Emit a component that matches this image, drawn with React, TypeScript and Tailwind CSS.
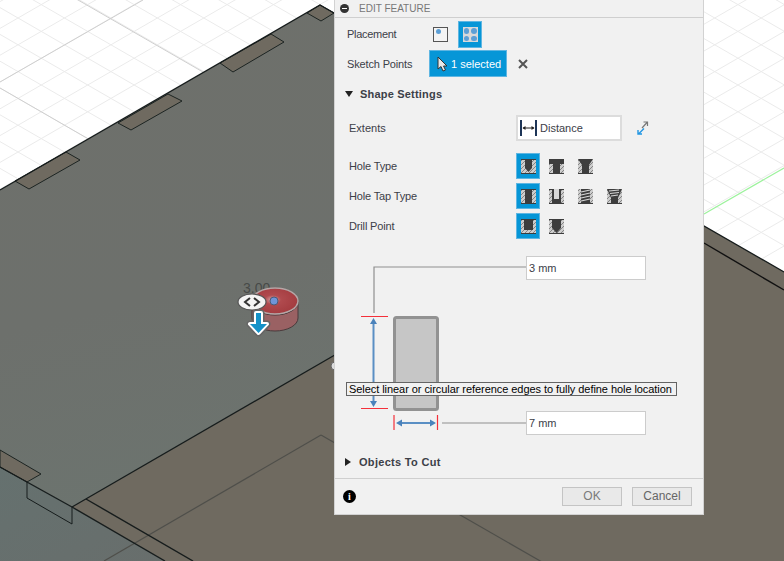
const STEP = 26.8;
const SLOPE = 0.577;
const steps = Array.from({ length: 70 }, (_, i) => i - 20);

function Scene() {
  return (
    <svg viewBox="0 0 784 561" className="block w-full h-full">
      <defs>
        <linearGradient id="plate" x1="0" y1="0" x2="0.3" y2="1">
          <stop offset="0" stopColor="#6e706b" />
          <stop offset="0.6" stopColor="#6d706c" />
          <stop offset="1" stopColor="#6c746f" />
        </linearGradient>
        <linearGradient id="low" x1="0" y1="0" x2="1" y2="1">
          <stop offset="0" stopColor="#65716f" />
          <stop offset="1" stopColor="#686e6c" />
        </linearGradient>
        <radialGradient id="glow" cx="0.45" cy="0.45" r="0.6">
          <stop offset="0" stopColor="#d8a8a8" />
          <stop offset="0.3" stopColor="#b04a4e" />
          <stop offset="1" stopColor="#a23a3e" />
        </radialGradient>
      </defs>
      <rect width="784" height="561" fill="#fff" />
      {steps.map(k => (
        <g key={k} stroke="#ebebeb" strokeWidth="1">
          <line x1="0" y1={82 + k * STEP} x2="784" y2={82 + k * STEP - 784 * SLOPE} />
          <line x1="0" y1={88 + k * STEP} x2="784" y2={88 + k * STEP + 784 * SLOPE} />
        </g>
      ))}
      <g stroke="#cfcfcf" strokeWidth="1">
        <line x1="0" y1="82" x2="143" y2="0" />
        <line x1="0" y1="-45" x2="784" y2="407" />
        <line x1="0" y1="88" x2="784" y2="540" />
      </g>
      <line x1="704" y1="214" x2="784" y2="168" stroke="#9cf29c" strokeWidth="1.2" />

      {/* lower body under the plate */}
      <polygon points="0,467 72,507 165,561 0,561" fill="url(#low)" />
      <polygon points="320,5 784,272 784,561 193,561 72,507" fill="#6f6a60" />
      <polygon points="72,507 86,499 193,561 165,561" fill="#6f6a60" />
      <line x1="104" y1="561" x2="321" y2="435" stroke="#4f4f4a" strokeWidth="1.2" />
      <line x1="321" y1="435" x2="542" y2="562" stroke="#4f4f4a" strokeWidth="1.2" />
      <line x1="704" y1="243" x2="784" y2="290" stroke="#111" strokeWidth="1.4" />

      {/* top plate */}
      <polygon points="0,190 320,5 631,184 72,507 0,467" fill="url(#plate)" />
      {[
        "15,181 29,189 80,160 66,152",
        "118,123 131,130 182,101 168,94",
        "220,63 233,72 284,42 271,34",
        "307,13 321,21 334,13 320,5",
        "0,450 41,474 27,482 0,467",
      ].map(p => (
        <polygon key={p} points={p} fill="#6f6a60" stroke="#1c2422" strokeWidth="1" />
      ))}
      <polyline points="0,190 320,5 784,272" fill="none" stroke="#161c1c" strokeWidth="1.3" />
      <polyline points="0,467 72,507 165,561" fill="none" stroke="#161c1c" strokeWidth="1.4" />
      <line x1="72" y1="507" x2="340" y2="352" stroke="#161c1c" strokeWidth="1.3" />
      <line x1="86" y1="499" x2="193" y2="561" stroke="#161c1c" strokeWidth="1.4" />
      <polyline points="27,482 27,498 72,524 72,507" fill="none" stroke="#161c1c" strokeWidth="1" />
      <circle cx="335" cy="366" r="4" fill="#dcdcdc" stroke="#666" strokeWidth="1" />

      {/* hole preview */}
      <text x="243" y="293" fontSize="14" fill="#474a48" fontFamily="Liberation Sans">3.00</text>
      <path d="M252 301 a23 13 0 0 1 46 0 v17 a23 13 0 0 1 -46 0 z" fill="#9a6163" stroke="#4a3b3c" strokeWidth="1" />
      <path d="M252 302 a23 13 0 0 0 46 0" fill="none" stroke="#3e3335" strokeWidth="1" />
      <ellipse cx="275" cy="301" rx="23" ry="13" fill="url(#glow)" stroke="#b5a7a7" strokeWidth="1.5" />
      <circle cx="274" cy="301" r="4" fill="#6f95d8" stroke="#4b5a78" strokeWidth="1" />
      <ellipse cx="252" cy="302" rx="14" ry="8" fill="#f4f4f4" stroke="#555" strokeWidth="1.2" />
      <path d="M250 298 l-5 4 5 4 M254 298 l5 4 -5 4" fill="none" stroke="#333" strokeWidth="2" />
      <path d="M256 313 h5 v11 h6 l-8.5 9 -8.5 -9 h6 z" fill="none" stroke="#666" strokeWidth="7" strokeLinejoin="round" />
      <path d="M256 313 h5 v11 h6 l-8.5 9 -8.5 -9 h6 z" fill="#1592c8" stroke="#fff" strokeWidth="4" strokeLinejoin="round" paintOrder="stroke" />
    </svg>
  );
}

function Hatch({ children }: { children: React.ReactNode }) {
  return (
    <svg width="15" height="15" viewBox="0 0 15 15" className="block">
      <rect width="15" height="15" fill="#cdcdcd" />
      <path d="M-2 4 L4 -2 M-2 8 L8 -2 M-2 12 L12 -2 M-2 16 L16 -2 M2 16 L17 1 M6 16 L17 5 M10 16 L17 9 M14 16 L17 13" stroke="#858585" strokeWidth="1" />
      {children}
    </svg>
  );
}

const DARK = "#3d3d3d";
const baseLine = <path d="M0 14.5 H15" stroke={DARK} />;

const holeIcons: Record<string, React.ReactNode> = {
  simple: (
    <>
      <path d="M0 0 h15 v1 h-4 v8 l-3.5 4 -3.5 -4 v-8 h-4 z" fill={DARK} />
      {baseLine}
    </>
  ),
  counterbore: (
    <>
      <path d="M0 0 h15 v5 h-4 v9 h-7 v-9 h-4 z" fill={DARK} />
      {baseLine}
    </>
  ),
  countersink: (
    <>
      <path d="M0 0 h15 l-4 6 v8 h-7 v-8 z" fill={DARK} />
      {baseLine}
    </>
  ),
  plain: (
    <>
      <path d="M0 0 h15 v1 h-4 v13 h-7 v-13 h-4 z" fill={DARK} />
      {baseLine}
    </>
  ),
  clearance: (
    <>
      <path d="M0 0 h15 v1 h-3 v13 h-9 v-13 h-3 z" fill={DARK} />
      <rect x="5" y="0" width="5" height="10" fill="#d8d8d8" />
      {baseLine}
    </>
  ),
  tapped: (
    <>
      <rect x="3" y="0" width="9" height="14" fill={DARK} />
      <path d="M3 3 L12 1 M3 6 L12 4 M3 9 L12 7 M3 12 L12 10" stroke="#d6d6d6" strokeWidth="1.2" />
      {baseLine}
    </>
  ),
  taper: (
    <>
      <path d="M0 0 h15 l-4 9 v5 h-7 v-5 z" fill={DARK} />
      <path d="M2 2 L12 1 M3 4.5 L12 3.5 M4 7 L11 6" stroke="#d6d6d6" strokeWidth="1.1" />
      {baseLine}
    </>
  ),
  flat: (
    <>
      <path d="M0 0 h15 v1 h-3 v10 h-9 v-10 h-3 z" fill={DARK} />
      {baseLine}
    </>
  ),
  angled: (
    <>
      <path d="M0 0 h15 v1 h-3 v8 l-4.5 5 -4.5 -5 v-8 h-3 z" fill={DARK} />
      {baseLine}
    </>
  ),
};

function IconRow({ label, icons }: { label: string; icons: string[] }) {
  return (
    <div className="flex items-center h-[26px] pl-[14px]">
      <span className="w-[167px] text-[11px] tracking-[-0.15px] text-[#3c4048]">{label}</span>
      <div className="flex items-center gap-[14px]">
        {icons.map((name, i) => (
          <div
            key={name}
            className={i === 0 ? "w-[24px] h-[26px] flex items-center justify-center bg-[#0696d7] border border-[#5fb6e2] mr-[-5px]" : ""}
          >
            <Hatch>{holeIcons[name]}</Hatch>
          </div>
        ))}
      </div>
    </div>
  );
}

function HoleDiagram() {
  return (
    <div className="relative h-[190px]">
      <svg width="368" height="190" viewBox="335 250 368 190" className="absolute left-0 top-0">
        <polyline points="374,313 374,267 526,267" fill="none" stroke="#8f8f8f" strokeWidth="1.2" />
        <line x1="442" y1="423" x2="526" y2="423" stroke="#8f8f8f" strokeWidth="1.2" />
        <rect x="394.5" y="317.5" width="43" height="92" rx="2" fill="#c6c6c6" stroke="#929292" strokeWidth="3" />
        <path d="M361 316.5 H388 M361 408.5 H388 M394 415 V430 M437.5 415 V430" stroke="#f4303a" strokeWidth="1.2" />
        <path d="M373.5 322 V404" stroke="#5a8fc4" strokeWidth="2" />
        <path d="M373.5 318 l-3.5 6 h7 z M373.5 407 l-3.5 -6 h7 z" fill="#4a82bb" />
        <path d="M399 423 H433" stroke="#5a8fc4" strokeWidth="2" />
        <path d="M396 423 l6 -3.5 v7 z M436 423 l-6 -3.5 v7 z" fill="#4a82bb" />
      </svg>
      <input
        readOnly
        value="3 mm"
        className="absolute left-[191px] top-[6px] w-[120px] h-[24px] bg-white border border-[#cccccc] pl-[2px] text-[11px] text-[#3c4048] font-['Liberation_Sans',sans-serif] outline-none"
      />
      <input
        readOnly
        value="7 mm"
        className="absolute left-[191px] top-[161px] w-[120px] h-[24px] bg-white border border-[#cccccc] pl-[2px] text-[11px] text-[#3c4048] font-['Liberation_Sans',sans-serif] outline-none"
      />
      <div className="absolute left-[11px] top-[132px] w-[331px] h-[14px] bg-[#f1f1f1] border border-[#646464] pl-[2px] text-[11px] tracking-[-0.06px] leading-[12px] text-black whitespace-nowrap">
        Select linear or circular reference edges to fully define hole location
      </div>
    </div>
  );
}

export default function App() {
  return (
    <div className="relative w-[784px] h-[561px] overflow-hidden font-['Liberation_Sans',sans-serif]">
      <Scene />

      <div className="absolute left-[334px] top-0 w-[370px] h-[515px] flex flex-col bg-[#f1f1f1] border-x border-b border-[#d2d2d2]">
        <div className="flex items-center h-[18px] pl-[5px] border-b border-[#cfcfcf] shrink-0">
          <span className="w-[9px] h-[9px] rounded-full bg-[#333] flex items-center justify-center">
            <span className="w-[5px] h-[1px] bg-white" />
          </span>
          <span className="ml-[10px] text-[10px] text-[#777]">EDIT FEATURE</span>
        </div>

        <div className="flex items-center h-[30px] pl-[12px] mt-[2px]">
          <span className="w-[86px] text-[11px] tracking-[-0.3px] text-[#3c4048]">Placement</span>
          <span className="relative w-[15px] h-[15px] bg-[#f4f4f4] border border-[#555]">
            <span className="absolute left-[2px] top-[1px] w-[5px] h-[5px] rounded-full bg-[#5c9fd6]" />
          </span>
          <span className="ml-[10px] w-[24px] h-[27px] bg-[#0696d7] border border-[#5fb6e2] flex items-center justify-center">
            <span className="w-[15px] h-[15px] bg-[#d9d9d9] grid grid-cols-2 gap-[2px] p-[1px]">
              <i className="rounded-full bg-[#5c9fd6]" />
              <i className="rounded-full bg-[#5c9fd6]" />
              <i className="rounded-full bg-[#5c9fd6]" />
              <i className="rounded-full bg-[#5c9fd6]" />
            </span>
          </span>
        </div>

        <div className="flex items-center h-[27px] pl-[12px] mt-[1px]">
          <span className="w-[82px] text-[11px] tracking-[-0.15px] text-[#3c4048]">Sketch Points</span>
          <span className="flex items-center w-[78px] h-[27px] bg-[#0696d7] border border-[#5fb6e2] pl-[7px] text-white text-[11px]">
            <svg width="11" height="16" viewBox="0 0 11 16" className="mr-[3px]">
              <path d="M1 1 V13 L4 10.5 L6 15 L8.5 14 L6.5 10 H10 Z" fill="#e8e8e8" stroke="#333" strokeWidth="1" />
            </svg>
            1 selected
          </span>
          <svg width="10" height="10" viewBox="0 0 10 10" className="ml-[11px]">
            <path d="M1 1 L9 9 M9 1 L1 9" stroke="#555" strokeWidth="2" />
          </svg>
        </div>

        <div className="flex items-center h-[18px] pl-[10px] mt-[8px]">
          <span className="w-0 h-0 border-x-[4px] border-x-transparent border-t-[6px] border-t-[#222]" />
          <span className="ml-[7px] text-[11px] tracking-[0.2px] font-bold text-[#3c4048]">Shape Settings</span>
        </div>

        <div className="flex items-center h-[26px] pl-[14px] mt-[12px]">
          <span className="w-[167px] text-[11px] text-[#3c4048]">Extents</span>
          <span className="flex items-center w-[106px] h-[26px] bg-white border-2 border-[#dcdcdc] pl-[2px] text-[11px] text-[#3c4048]">
            <svg width="17" height="16" viewBox="0 0 17 16" className="mr-[3px]">
              <path d="M1 0 V16 M16 0 V16" stroke="#1d3557" strokeWidth="2" />
              <path d="M3 8 H14" stroke="#222" strokeWidth="1" />
              <path d="M2.5 8 l3 -2 v4 z M14.5 8 l-3 -2 v4 z" fill="#222" />
            </svg>
            Distance
          </span>
          <svg width="12" height="14" viewBox="0 0 12 14" className="ml-[15px]">
            <path d="M5 7 L10 1.5 M6.5 1 H10.5 V5" fill="none" stroke="#777" strokeWidth="1.2" />
            <path d="M7 7.5 L1.5 13 M1 9 V13 H5" fill="none" stroke="#2196e3" strokeWidth="1.4" />
          </svg>
        </div>

        <div className="flex flex-col gap-[4px] mt-[12px]">
          <IconRow label="Hole Type" icons={["simple", "counterbore", "countersink"]} />
          <IconRow label="Hole Tap Type" icons={["plain", "clearance", "tapped", "taper"]} />
          <IconRow label="Drill Point" icons={["flat", "angled"]} />
        </div>

        <div className="mt-[11px]">
          <HoleDiagram />
        </div>

        <div className="flex items-center h-[18px] pl-[10px] mt-[13px]">
          <span className="w-0 h-0 border-y-[4px] border-y-transparent border-l-[6px] border-l-[#222]" />
          <span className="ml-[8px] text-[11px] tracking-[0.3px] font-bold text-[#3c4048]">Objects To Cut</span>
        </div>

        <div className="flex items-center justify-between h-[37px] pl-[8px] pr-[11px] mt-[7px] border-t border-[#cfcfcf]">
          <span className="w-[13px] h-[13px] rounded-full bg-black text-white text-[10px] leading-[13px] font-bold text-center font-['Liberation_Serif',serif]">i</span>
          <div className="flex gap-[10px]">
            <button className="w-[60px] h-[19px] bg-[#e9e9e9] border border-[#c4c4c4] text-[12px] leading-none text-[#7a7a7a]">OK</button>
            <button className="w-[60px] h-[19px] bg-[#e9e9e9] border border-[#c4c4c4] text-[12px] leading-none text-[#666]">Cancel</button>
          </div>
        </div>
      </div>
    </div>
  );
}
